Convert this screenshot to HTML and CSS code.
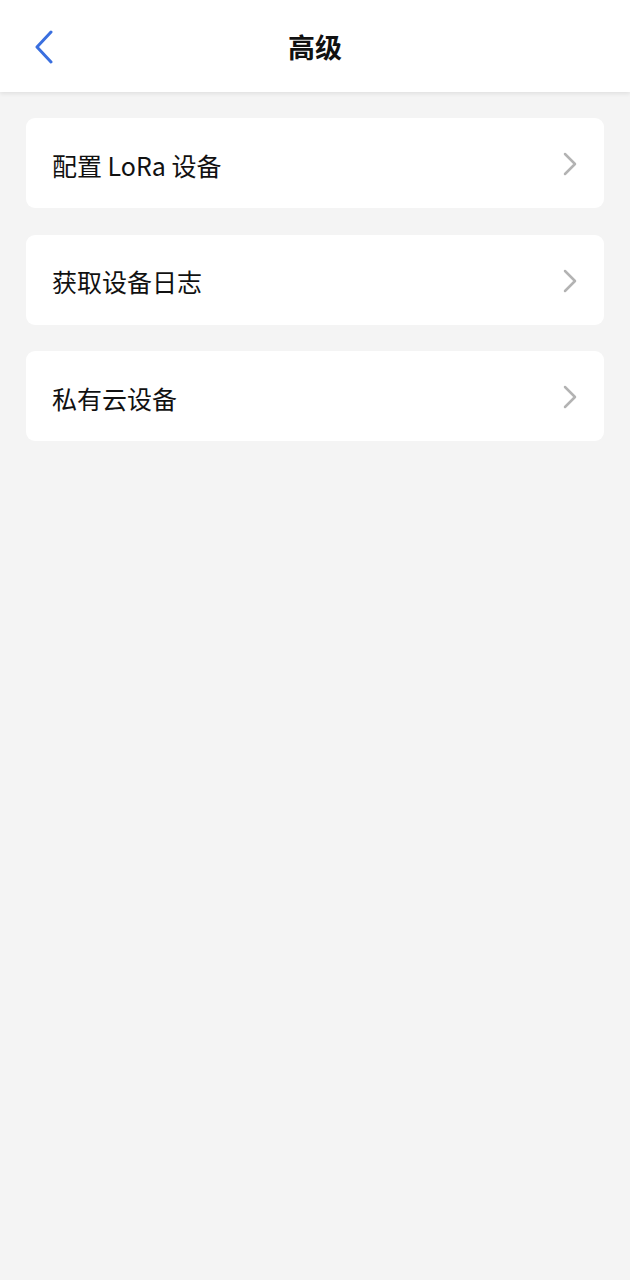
FILE: index.html
```html
<!DOCTYPE html>
<html lang="zh-CN">

<head>
    <meta charset="UTF-8">
    <meta name="viewport" content="width=device-width, initial-scale=1.0">
    <title>高级</title>
    <link rel="stylesheet" href="styles.css">
</head>

<body>
    <div class="header">
        <a class="back" href="#">
            <svg width="22" height="34" viewBox="0 0 22 34">
                <path d="M18 2 L4 17 L18 32" fill="none" stroke="#3a6fdf" stroke-width="3" stroke-linecap="round" stroke-linejoin="round"/>
            </svg>
        </a>
        <h1 class="title">高级</h1>
    </div>

    <div class="list">
        <a class="item" href="#">
            <span class="label">配置 LoRa 设备</span>
            <svg class="chevron" width="16" height="24" viewBox="0 0 16 24">
                <path d="M3 2 L13 12 L3 22" fill="none" stroke="#b3b3b3" stroke-width="2.5" stroke-linecap="round" stroke-linejoin="round"/>
            </svg>
        </a>
        <a class="item" href="#">
            <span class="label">获取设备日志</span>
            <svg class="chevron" width="16" height="24" viewBox="0 0 16 24">
                <path d="M3 2 L13 12 L3 22" fill="none" stroke="#b3b3b3" stroke-width="2.5" stroke-linecap="round" stroke-linejoin="round"/>
            </svg>
        </a>
        <a class="item" href="#">
            <span class="label">私有云设备</span>
            <svg class="chevron" width="16" height="24" viewBox="0 0 16 24">
                <path d="M3 2 L13 12 L3 22" fill="none" stroke="#b3b3b3" stroke-width="2.5" stroke-linecap="round" stroke-linejoin="round"/>
            </svg>
        </a>
    </div>
</body>

</html>
```

FILE: styles.css
```css
body {
    margin: 0;
    background-color: #f4f4f4;
    font-family: "Noto Sans CJK SC", "Noto Sans", sans-serif;
    color: #111;
}

.header {
    height: 92px;
    background-color: #fff;
    box-shadow: 0 2px 4px rgba(0, 0, 0, 0.08);
    display: flex;
    align-items: center;
    justify-content: center;
    position: relative;
}

.back {
    position: absolute;
    left: 33px;
    top: 30px;
    display: block;
    line-height: 0;
}

.title {
    margin: 0;
    font-size: 27px;
    font-weight: bold;
    color: #111;
}

.list {
    padding: 26px 26px;
    display: flex;
    flex-direction: column;
    gap: 26.5px;
}

.item {
    height: 90px;
    background-color: #fff;
    border-radius: 9px;
    display: flex;
    align-items: center;
    justify-content: space-between;
    padding: 0 26px 0 26px;
    text-decoration: none;
    color: #111;
}

.label {
    font-size: 25px;
    padding-top: 3px;
}

.chevron {
    margin-top: 2px;
}
```
